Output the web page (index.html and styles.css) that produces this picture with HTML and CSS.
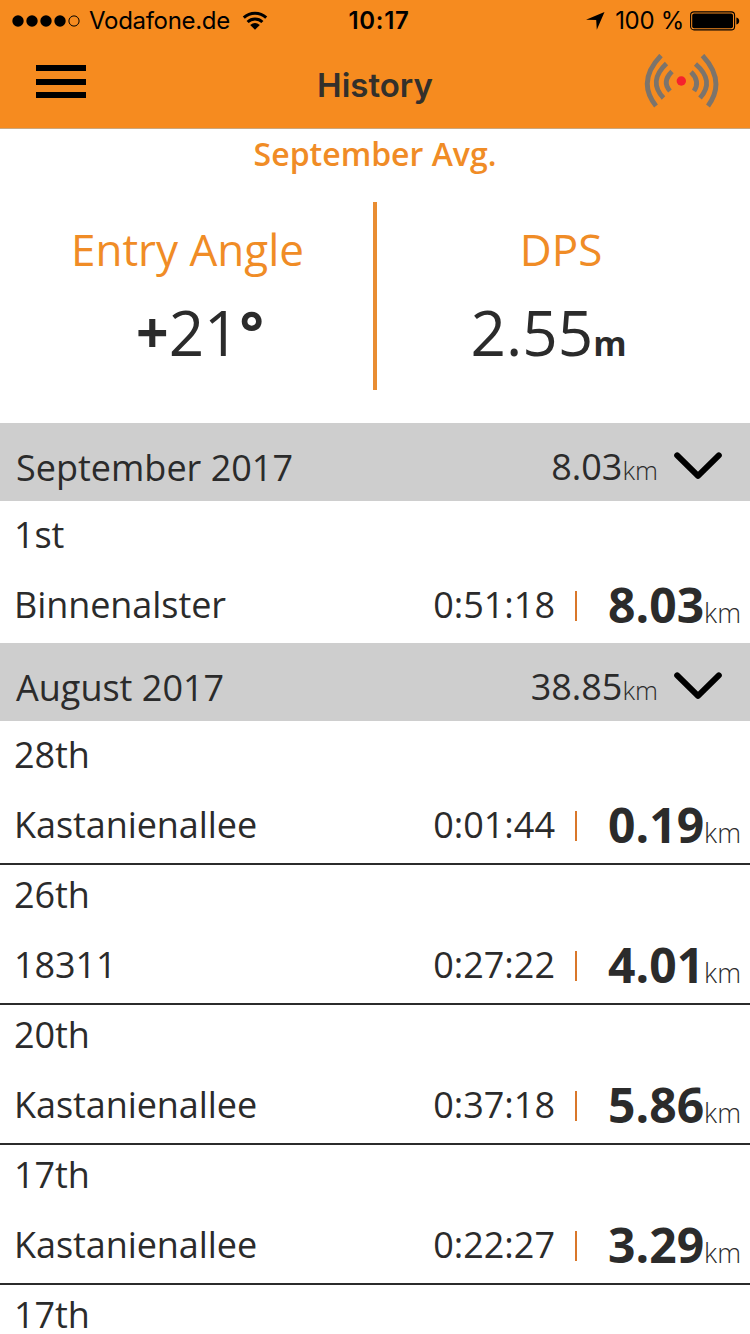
FILE: index.html
```html
<!DOCTYPE html>
<html>
	<head>
		<meta charset="UTF-8">
		<title>History</title>
		<link rel="stylesheet" href="styles.css">
	</head>
	<body>
		<div class="wrap">
			<div class="top">
				<div class="status">
					<div class="statusLeft">
						<svg class="dots" width="68" height="12" viewBox="0 0 68 12">
							<circle cx="6" cy="6" r="5.7"/>
							<circle cx="20" cy="6" r="5.7"/>
							<circle cx="34" cy="6" r="5.7"/>
							<circle cx="48" cy="6" r="5.7"/>
							<circle cx="62" cy="6" r="5.1" fill="none" stroke="#000" stroke-width="1"/>
						</svg>
						<span class="carrier">Vodafone.de</span>
						<svg class="wifi" width="26" height="20" viewBox="0 0 26 20">
							<path d="M1.8 6.6A16.5 16.5 0 0 1 24.2 6.6M5.6 11A10.8 10.8 0 0 1 20.4 11" fill="none" stroke="#000" stroke-width="3"/>
							<path d="M13 18.8L8.2 14Q13 10.2 17.8 14Z"/>
						</svg>
					</div>
					<div class="clock">10:17</div>
					<div class="statusRight">
						<svg class="arrow" width="19" height="18" viewBox="0 0 19 18">
							<path d="M18.5 0L10.8 17.8L10.2 8L0 7.8Z"/>
						</svg>
						<span class="percent">100 %</span>
						<svg class="battery" width="50" height="20" viewBox="0 0 50 20">
							<rect x="0.6" y="0.9" width="44" height="18" rx="3.4" fill="none" stroke="#000" stroke-width="1.1"/>
							<rect x="2.2" y="2.5" width="40.8" height="14.8" rx="2"/>
							<path d="M46.4 6.4Q49.2 7.2 49.2 10T46.4 13.4Z"/>
						</svg>
					</div>
				</div>
				<div class="nav">
					<div class="menu">
						<i></i>
						<i></i>
						<i></i>
					</div>
					<h1>History</h1>
					<svg class="signal" width="76" height="56" viewBox="0 0 76 56">
						<g fill="none" stroke="#7c746c" stroke-width="4.8">
							<path d="M17 1.5Q-7.7 27.2 12 52"/>
							<path d="M22.5 9.5Q3.6 27.2 19.5 44"/>
							<path d="M28 17.5Q17.6 27.7 26 37"/>
							<path d="M58.5 1.5Q82.3 27.2 64 52"/>
							<path d="M51.5 10Q71.2 27 56 44"/>
							<path d="M47 18Q56.5 27.5 50 37"/>
						</g>
						<circle cx="37.3" cy="27" r="4.7" fill="#f5222d"/>
					</svg>
				</div>
			</div>
			<div class="average">
				<h2>September Avg.</h2>
				<div class="values">
					<div class="value angle">
						<div class="valueTitle">Entry Angle</div>
						<div class="valueNum"><b>+</b>21<b>°</b></div>
					</div>
					<div class="divider"></div>
					<div class="value dps">
						<div class="valueTitle">DPS</div>
						<div class="valueNum">2.55<b>m</b></div>
					</div>
				</div>
			</div>
			<div class="month">
				<div class="monthTitle">
					<span class="name">September 2017</span>
					<span class="total">8.03<small>km</small></span>
					<svg class="chevron" width="48" height="28" viewBox="0 0 48 28"><path d="M3.2 3.4L24 23.8L44.8 3.4"/></svg>
				</div>
				<ul>
					<li>
						<div class="day">1st</div>
						<div class="session"><span class="place">Binnenalster</span><span class="time">0:51:18</span><i></i><span class="distance">8.03<small>km</small></span></div>
					</li>
				</ul>
			</div>
			<div class="month">
				<div class="monthTitle">
					<span class="name">August 2017</span>
					<span class="total">38.85<small>km</small></span>
					<svg class="chevron" width="48" height="28" viewBox="0 0 48 28"><path d="M3.2 3.4L24 23.8L44.8 3.4"/></svg>
				</div>
				<ul>
					<li>
						<div class="day">28th</div>
						<div class="session"><span class="place">Kastanienallee</span><span class="time">0:01:44</span><i></i><span class="distance">0.19<small>km</small></span></div>
					</li>
					<li>
						<div class="day">26th</div>
						<div class="session"><span class="place">18311</span><span class="time">0:27:22</span><i></i><span class="distance">4.01<small>km</small></span></div>
					</li>
					<li>
						<div class="day">20th</div>
						<div class="session"><span class="place">Kastanienallee</span><span class="time">0:37:18</span><i></i><span class="distance">5.86<small>km</small></span></div>
					</li>
					<li>
						<div class="day">17th</div>
						<div class="session"><span class="place">Kastanienallee</span><span class="time">0:22:27</span><i></i><span class="distance">3.29<small>km</small></span></div>
					</li>
					<li>
						<div class="day">17th</div>
					</li>
				</ul>
			</div>
		</div>
	</body>
</html>
```
FILE: styles.css
```css
* {
	box-sizing: border-box;
}
body, h1, h2, ul {
	margin: 0;
	padding: 0;
}
li {
	list-style: none;
}
svg {
	display: block;
	flex: none;
}
.wrap {
	width: 750px;
	height: 1334px;
	overflow: hidden;
	background-color: #fff;
	color: #2b2b2b;
	font-family: "Open Sans", "Noto Sans", sans-serif;
}

/* status bar + nav */
.top {
	height: 129px;
	background-color: #f68b1f;
	border-bottom: 1px solid #c9a77f;
	font-family: Inter, "Liberation Sans", sans-serif;
}
.status {
	display: grid;
	grid-template-columns: 300px 1fr 300px;
	height: 40px;
	color: #000;
	font-size: 24px;
	line-height: 42px;
}
.statusLeft, .statusRight {
	display: flex;
	align-items: center;
}
.statusLeft {
	padding-left: 12px;
}
.carrier {
	margin: 0 12px 0 9px;
	letter-spacing: -0.3px;
}
.clock {
	padding-left: 8px;
	text-align: center;
	font-weight: 600;
	letter-spacing: 0.7px;
}
.statusRight {
	justify-content: flex-end;
	padding-right: 10px;
}
.percent {
	margin: 0 6px 0 10px;
	letter-spacing: -0.3px;
}
.nav {
	display: flex;
	align-items: center;
	justify-content: space-between;
	height: 84px;
	padding: 0 30px 0 36px;
}
.menu {
	width: 58px;
	margin-bottom: 1px;
}
.menu i {
	display: block;
	width: 50px;
	height: 6px;
	margin-bottom: 8px;
	background-color: #000;
}
.menu i:nth-child(2) {
	margin-bottom: 7px;
}
.menu i:last-child {
	margin-bottom: 0;
}
.nav h1 {
	padding: 5px 0 0 12px;
	color: #33302b;
	font-size: 33px;
	font-weight: 600;
}

/* monthly average */
.average {
	height: 294px;
	color: #f08c26;
}
.average h2 {
	height: 73px;
	font-size: 32px;
	font-weight: 600;
	line-height: 50px;
	text-align: center;
}
.values {
	display: flex;
	height: 188px;
}
.value {
	flex: 1;
	text-align: center;
}
.divider {
	width: 4px;
	background-color: #e98d32;
}
.valueTitle {
	padding-top: 17px;
	font-size: 44px;
	line-height: 60px;
}
.valueNum {
	color: #2b2b2b;
	font-size: 62px;
	line-height: 106px;
}
.valueNum b {
	line-height: 1;
}
.angle .valueTitle {
	padding-left: 2px;
}
.angle .valueNum {
	padding-left: 27px;
}
.angle b {
	font-size: 57px;
	vertical-align: 3px;
}
.dps .valueTitle {
	padding-right: 5px;
}
.dps .valueNum {
	padding-right: 30px;
}
.dps b {
	font-size: 34px;
}

/* month list */
.monthTitle {
	display: flex;
	height: 78px;
	padding: 0 28px 0 16px;
	background-color: #cecece;
	font-size: 36px;
	line-height: 76px;
}
.monthTitle .name {
	flex: 1;
	padding-top: 7px;
}
.monthTitle .total {
	padding-top: 6px;
}
small {
	font-size: 27px;
	font-weight: 300;
}
.monthTitle small {
	font-size: 26px;
}
.chevron {
	margin: 29px 0 0 16px;
}
.chevron path {
	fill: none;
	stroke: #000;
	stroke-width: 6;
	stroke-linecap: round;
	stroke-linejoin: round;
}
.month ul {
	padding-top: 4px;
}
.month li {
	height: 140px;
	padding: 0 9px 0 14px;
	border-bottom: 2px solid #2b2b2b;
	font-size: 36px;
}
.month li:last-child {
	height: 138px;
	border-bottom: none;
}
.day {
	height: 56px;
	padding-top: 2px;
	line-height: 56px;
}
.session {
	display: flex;
	align-items: center;
	height: 82px;
	padding-top: 5px;
	line-height: 77px;
}
.place {
	flex: 1;
}
.day, .place {
	letter-spacing: -0.07px;
}
.session i {
	width: 2px;
	height: 30px;
	margin: 3px 0 0 20px;
	background-color: #d9772a;
}
.distance {
	width: 164px;
	padding-top: 7px;
	text-align: right;
	font-size: 48px;
	font-weight: bold;
}
```
